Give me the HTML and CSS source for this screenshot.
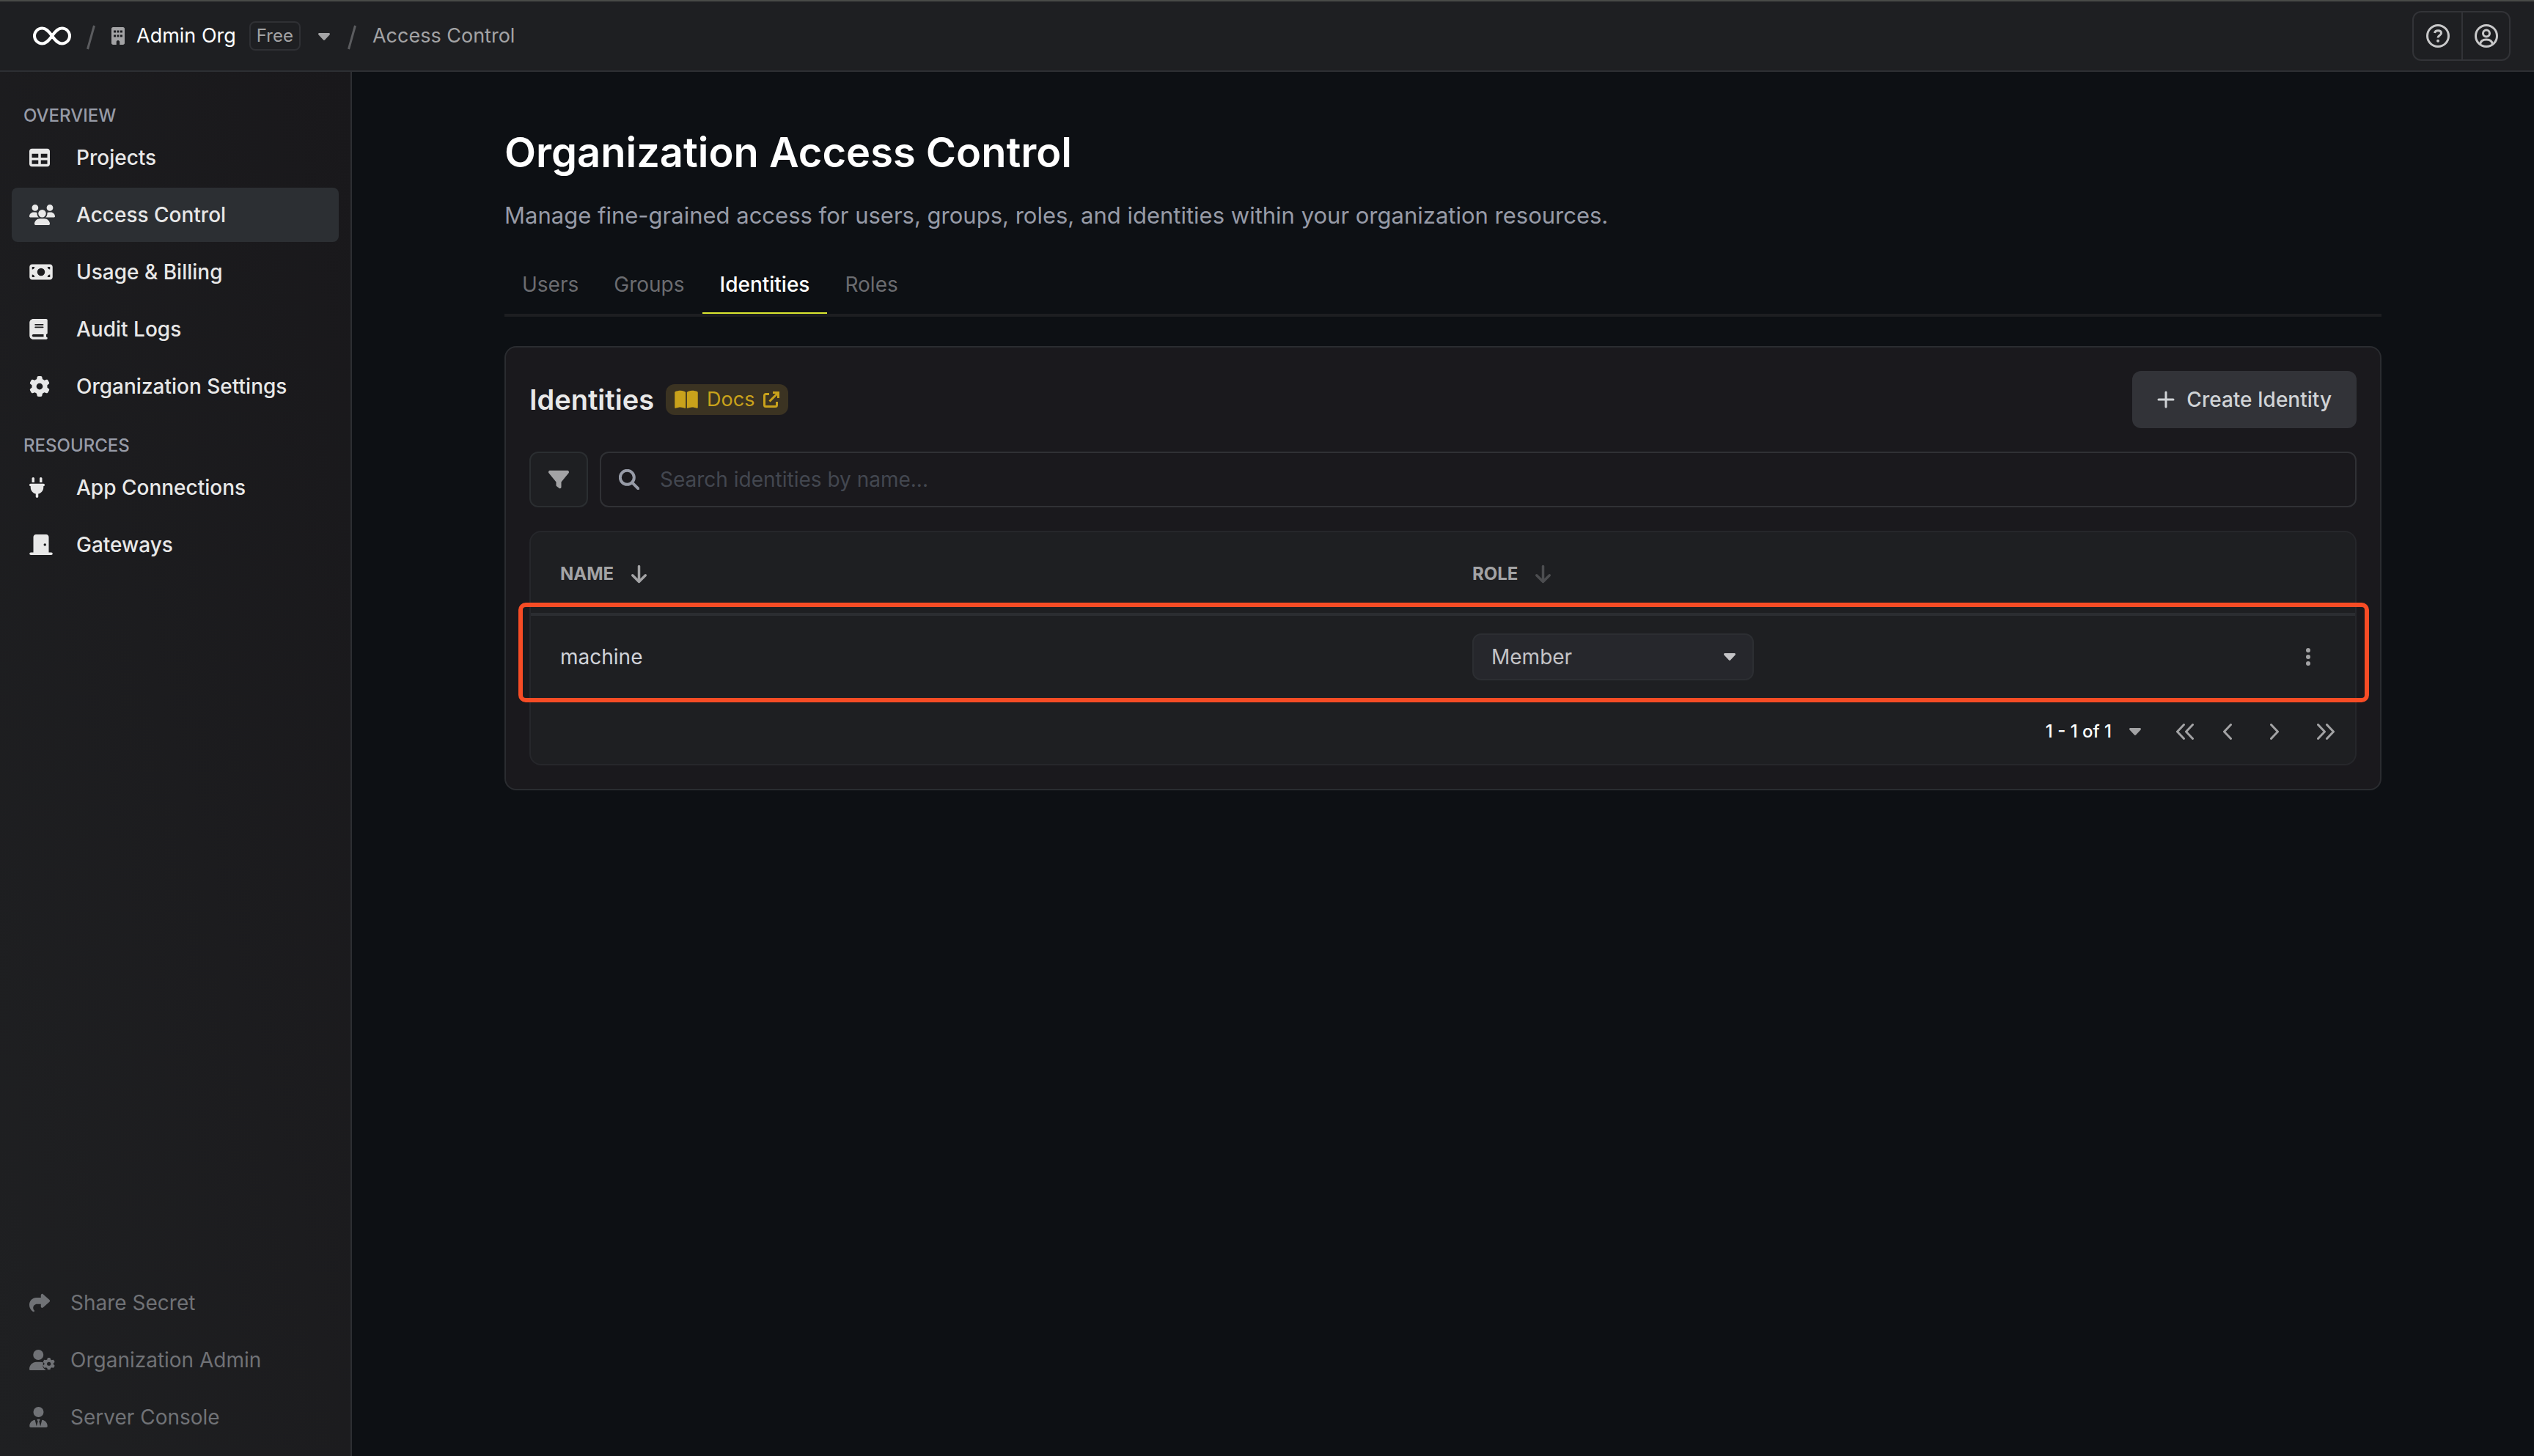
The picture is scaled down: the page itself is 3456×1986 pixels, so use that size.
FILE: index.html
```html
<!DOCTYPE html>
<html lang="en">
<head>
<meta charset="utf-8">
<meta name="viewport" content="width=device-width, initial-scale=1">
<title>Organization Access Control</title>
<link rel="stylesheet" href="styles.css">
</head>
<body>
<svg class="sprite" aria-hidden="true">
  <symbol id="caret" viewBox="0 0 16 10"><path d="M1.500 0h13c1.300 0 1.900 1.500 1 2.400L9.200 9.300a1.700 1.700 0 0 1-2.400 0L.5 2.400C-.4 1.500.2 0 1.500 0z"/></symbol>
  <symbol id="arrow-down" viewBox="0 0 384 512"><path d="M169.400 470.600c12.500 12.500 32.800 12.500 45.300 0l160-160c12.500-12.500 12.500-32.800 0-45.300s-32.800-12.500-45.300 0L224 370.800V64c0-17.700-14.300-32-32-32s-32 14.300-32 32V370.800L54.600 265.400c-12.500-12.500-32.800-12.500-45.300 0s-12.500 32.800 0 45.300l160 160z"/></symbol>
  <symbol id="gear" viewBox="0 0 512 512"><path d="M495.900 166.600c3.200 8.700 .5 18.400-6.400 24.600l-43.300 39.400c1.100 8.300 1.700 16.800 1.700 25.400s-.6 17.100-1.700 25.400l43.300 39.400c6.900 6.200 9.600 15.900 6.400 24.600c-4.400 11.900-9.700 23.300-15.800 34.300l-4.700 8.100c-6.600 11-14 21.400-22.100 31.200c-5.900 7.200-15.700 9.600-24.500 6.800l-55.700-17.700c-13.400 10.300-28.200 18.900-44 25.400l-12.500 57.100c-2 9.100-9 16.300-18.200 17.800c-13.800 2.300-28 3.500-42.500 3.500s-28.700-1.200-42.500-3.500c-9.200-1.500-16.200-8.700-18.200-17.800l-12.500-57.100c-15.800-6.500-30.600-15.100-44-25.400L83.100 425.900c-8.800 2.800-18.600 .3-24.500-6.800c-8.100-9.800-15.500-20.200-22.100-31.200l-4.700-8.100c-6.100-11-11.400-22.400-15.800-34.300c-3.200-8.700-.5-18.400 6.400-24.600l43.300-39.400C64.600 273.100 64 264.600 64 256s.6-17.100 1.700-25.400L22.400 191.200c-6.900-6.200-9.600-15.900-6.400-24.600c4.400-11.900 9.700-23.300 15.800-34.300l4.700-8.100c6.600-11 14-21.400 22.100-31.200c5.900-7.200 15.700-9.600 24.500-6.800l55.700 17.700c13.400-10.300 28.200-18.900 44-25.400l12.500-57.100c2-9.100 9-16.300 18.200-17.800C227.300 1.200 241.500 0 256 0s28.700 1.200 42.500 3.500c9.200 1.500 16.200 8.700 18.200 17.800l12.500 57.100c15.800 6.500 30.600 15.100 44 25.400l55.700-17.700c8.800-2.800 18.600-.3 24.500 6.800c8.100 9.800 15.500 20.200 22.100 31.200l4.700 8.100c6.100 11 11.400 22.400 15.800 34.300zM256 336a80 80 0 1 0 0-160 80 80 0 1 0 0 160z"/></symbol>
</svg>

<header class="topbar">
  <nav class="crumbs" aria-label="Breadcrumb">
    <a class="logo" href="#" aria-label="Home"><svg width="54" height="26" viewBox="0 0 54 26"><path d="M27 13C22 6 18.500 2.500 13.500 2.500a10.500 10.500 0 0 0 0 21C18.500 23.500 22 20 27 13S35.500 2.500 40.500 2.500a10.500 10.500 0 0 1 0 21C35.500 23.500 32 20 27 13z" fill="none" stroke="#fff" stroke-width="4"/></svg></a>
    <svg class="slash" width="12" height="34" viewBox="0 0 12 34"><path d="M10.500 1 1.500 33"/></svg>
    <a class="org" href="#">
      <svg class="fill" width="18" height="24" viewBox="0 0 384 512"><path fill-rule="evenodd" d="M48 0C21.500 0 0 21.500 0 48V464c0 26.500 21.500 48 48 48h96V432c0-26.500 21.500-48 48-48s48 21.500 48 48v80h96c26.500 0 48-21.500 48-48V48c0-26.500-21.500-48-48-48H48zM64 96h64v64H64zM160 96h64v64h-64zM256 96h64v64h-64zM64 224h64v64H64zM160 224h64v64h-64zM256 224h64v64h-64z"/></svg>
      <span>Admin Org</span>
    </a>
    <span class="plan">Free</span>
    <button class="plain org-menu" type="button" aria-label="Switch organization"><svg class="fill" width="16" height="10"><use href="#caret"/></svg></button>
    <svg class="slash" width="12" height="34" viewBox="0 0 12 34"><path d="M10.500 1 1.500 33"/></svg>
    <span class="crumb">Access Control</span>
  </nav>
  <div class="top-actions">
    <button type="button" aria-label="Help"><svg class="line" width="32" height="32" viewBox="0 0 32 32"><circle cx="16" cy="16" r="14.500"/><path d="M11.500 12c.5-2.200 2.200-3.200 4.500-3.200 2.600 0 4.500 1.300 4.500 3.500 0 3-4.500 3-4.500 6.200"/><circle class="dot" cx="16" cy="22.800" r="2"/></svg></button>
    <button type="button" aria-label="Account"><svg class="line" width="32" height="32" viewBox="0 0 32 32"><circle cx="16" cy="16" r="14.500"/><circle cx="16" cy="12.500" r="4.500"/><path d="M7.500 27.500c.5-4 3-6.500 8.500-6.500s8 2.500 8.500 6.500"/></svg></button>
  </div>
</header>

<div class="shell">
  <aside class="sidebar">
    <nav aria-label="Main">
      <h2>OVERVIEW</h2>
      <ul>
        <li><a href="#"><svg width="28" height="28" viewBox="0 0 512 512"><path d="M64 256V160H224v96H64zm0 64H224v96H64V320zm224 96V320H448v96H288zM448 256H288V160H448v96zM64 32C28.700 32 0 60.700 0 96V416c0 35.300 28.700 64 64 64H448c35.300 0 64-28.700 64-64V96c0-35.300-28.700-64-64-64H64z"/></svg>Projects</a></li>
        <li><a class="active" href="#" aria-current="page"><svg width="35" height="28" viewBox="0 0 640 512"><path d="M144 0a80 80 0 1 1 0 160A80 80 0 1 1 144 0zM512 0a80 80 0 1 1 0 160A80 80 0 1 1 512 0zM0 298.700C0 239.800 47.800 192 106.700 192h42.700c15.900 0 31 3.500 44.600 9.700c-1.300 7.200-1.900 14.700-1.900 22.300c0 38.200 16.800 72.500 43.300 96c-.2 0-.4 0-.7 0H21.300C9.600 320 0 310.400 0 298.700zM405.300 320c-.2 0-.4 0-.7 0c26.600-23.500 43.300-57.800 43.300-96c0-7.600-.7-15-1.900-22.300c13.600-6.300 28.700-9.700 44.600-9.700h42.700C592.200 192 640 239.800 640 298.700c0 11.800-9.600 21.300-21.300 21.300H405.300zM224 224a96 96 0 1 1 192 0 96 96 0 1 1 -192 0zM128 485.300C128 411.700 187.700 352 261.300 352H378.700C452.300 352 512 411.700 512 485.300c0 14.700-11.900 26.700-26.700 26.700H154.700c-14.700 0-26.700-11.900-26.700-26.700z"/></svg>Access Control</a></li>
        <li><a href="#"><svg width="32" height="28" viewBox="0 0 576 512"><path d="M64 64C28.700 64 0 92.700 0 128V384c0 35.300 28.700 64 64 64H512c35.300 0 64-28.700 64-64V128c0-35.300-28.700-64-64-64H64zm64 320H64V320c35.300 0 64 28.700 64 64zM64 192V128h64c0 35.300-28.700 64-64 64zM448 384c0-35.300 28.700-64 64-64v64H448zm64-192c-35.300 0-64-28.700-64-64h64v64zM288 160a96 96 0 1 1 0 192 96 96 0 1 1 0-192z"/></svg>Usage &amp; Billing</a></li>
        <li><a href="#"><svg width="25" height="28" viewBox="0 0 448 512"><path d="M96 0C43 0 0 43 0 96V416c0 53 43 96 96 96H384h32c17.700 0 32-14.300 32-32s-14.300-32-32-32V384c17.700 0 32-14.300 32-32V32c0-17.700-14.300-32-32-32H384 96zm0 384H352v64H96c-17.700 0-32-14.300-32-32s14.300-32 32-32zm32-240c0-8.800 7.200-16 16-16H336c8.800 0 16 7.200 16 16s-7.200 16-16 16H144c-8.800 0-16-7.200-16-16zm16 48H336c8.800 0 16 7.200 16 16s-7.200 16-16 16H144c-8.800 0-16-7.200-16-16s7.200-16 16-16z"/></svg>Audit Logs</a></li>
        <li><a href="#"><svg width="28" height="28"><use href="#gear"/></svg>Organization Settings</a></li>
      </ul>
      <h2>RESOURCES</h2>
      <ul>
        <li><a href="#"><svg width="21" height="28" viewBox="0 0 384 512"><path d="M96 0C78.300 0 64 14.300 64 32v96h64V32c0-17.700-14.300-32-32-32zM288 0c-17.700 0-32 14.300-32 32v96h64V32c0-17.700-14.300-32-32-32zM32 160c-17.700 0-32 14.300-32 32s14.300 32 32 32v32c0 77.400 55 142 128 156.800V480c0 17.700 14.300 32 32 32s32-14.300 32-32V412.800C297 398 352 333.400 352 256V224c17.700 0 32-14.300 32-32s-14.300-32-32-32H32z"/></svg>App Connections</a></li>
        <li><a href="#"><svg width="32" height="28" viewBox="0 0 576 512"><path d="M96 64c0-35.300 28.700-64 64-64H416c35.300 0 64 28.700 64 64V448h64c17.700 0 32 14.300 32 32s-14.300 32-32 32H432 144 32c-17.700 0-32-14.300-32-32s14.300-32 32-32H96V64zM384 288a32 32 0 1 0 0-64 32 32 0 1 0 0 64z"/></svg>Gateways</a></li>
      </ul>
    </nav>
    <nav class="secondary" aria-label="Secondary">
      <ul>
        <li><a href="#"><svg width="28" height="28" viewBox="0 0 512 512"><path d="M307 34.800c-11.500 5.100-19 16.600-19 29.200v64H176C78.800 128 0 206.800 0 304C0 417.300 81.500 467.900 100.200 478.100c2.500 1.400 5.300 1.900 8.100 1.900c10.900 0 19.700-8.900 19.700-19.700c0-7.500-4.300-14.400-9.800-19.500C108.800 431.900 96 414.400 96 384c0-53 43-96 96-96h96v64c0 12.600 7.400 24.100 19 29.200s25 3 34.400-5.400l160-144c6.700-6.100 10.600-14.700 10.600-23.800s-3.800-17.700-10.600-23.800l-160-144c-9.400-8.500-22.900-10.600-34.400-5.400z"/></svg>Share Secret</a></li>
        <li><a href="#"><svg width="35" height="28" viewBox="0 0 640 512"><path d="M224 256A128 128 0 1 0 224 0a128 128 0 1 0 0 256zM178.300 304C79.800 304 0 383.800 0 482.300 0 498.700 13.300 512 29.700 512H408c6-10-2-17-14-20-20-10-42-35-54-62-8-18-2-34 12-44-14-14-16-32-8-50l8-16c-25-10-50-16-82-16z"/><use href="#gear" x="336" y="200" width="304" height="304"/></svg>Organization Admin</a></li>
        <li><a href="#"><svg width="25" height="28" viewBox="0 0 448 512"><path d="M96 128a128 128 0 1 0 256 0A128 128 0 1 0 96 128zm94.500 200.200l18.600 31L175.800 483.100l-36-146.900c-2-8.100-9.800-13.400-17.900-11.300C51.900 342.400 0 405.800 0 481.300c0 17 13.800 30.700 30.700 30.700H162.500c0 0 0 0 .1 0H168 280h5.500c0 0 0 0 .1 0H417.300c17 0 30.700-13.800 30.700-30.700c0-75.500-51.900-138.900-121.900-156.400c-8.100-2-15.900 3.300-17.900 11.300l-36 146.900L238.900 359.200l18.600-31c6.400-10.700-1.300-24.200-13.700-24.200H224 204.300c-12.400 0-20.100 13.600-13.700 24.200z"/></svg>Server Console</a></li>
      </ul>
    </nav>
  </aside>

  <main class="page">
    <div class="content">
      <h1>Organization Access Control</h1>
      <p class="lead">Manage fine-grained access for users, groups, roles, and identities within your organization resources.</p>
      <div class="tabs" role="tablist">
        <button type="button" role="tab" aria-selected="false">Users</button>
        <button type="button" role="tab" aria-selected="false">Groups</button>
        <button type="button" role="tab" aria-selected="true">Identities</button>
        <button type="button" role="tab" aria-selected="false">Roles</button>
      </div>

      <section class="card">
        <div class="card-head">
          <h2>Identities</h2>
          <a class="docs" href="#">
            <svg width="32" height="28" viewBox="0 0 576 512"><path d="M249.600 471.500c10.800 3.800 22.400-4.100 22.400-15.500V78.600c0-4.200-1.600-8.400-5-11C247.400 52 202.400 32 144 32C93.500 32 46.300 45.300 18.100 56.100C6.800 60.500 0 71.700 0 83.800V454.100c0 11.900 12.800 20.200 24.100 16.500C55.600 460.100 105.500 448 144 448c33.900 0 79 14 105.600 23.500zm76.800 0C353 462 398.100 448 432 448c38.500 0 88.400 12.100 119.900 22.600c11.300 3.800 24.100-4.600 24.100-16.500V83.800c0-12.100-6.800-23.300-18.100-27.600C529.700 45.300 482.500 32 432 32c-58.400 0-103.400 20-123 35.600c-3.300 2.600-5 6.800-5 11V456c0 11.400 11.700 19.300 22.400 15.500z"/></svg>
            <span>Docs</span>
            <svg class="ext" width="22" height="22" viewBox="0 0 22 22"><path d="M8 3.500H3.500a2 2 0 0 0-2 2v13a2 2 0 0 0 2 2h13a2 2 0 0 0 2-2V14M13 1.500h7.500V9M20 2 8.500 13.500"/></svg>
          </a>
          <button class="create" type="button">
            <svg width="24" height="24" viewBox="0 0 24 24"><path d="M12 2v20M2 12h20"/></svg>
            Create Identity
          </button>
        </div>

        <div class="filters">
          <button class="filter" type="button" aria-label="Filter"><svg class="fill" width="28" height="28" viewBox="0 0 512 512"><path d="M3.900 54.900C10.500 40.900 24.500 32 40 32H472c15.500 0 29.500 8.900 36.100 22.900s4.600 30.500-5.200 42.500L320 320.900V448c0 12.100-6.800 23.200-17.700 28.600s-23.800 4.300-33.500-3l-64-48c-8.100-6-12.800-15.500-12.800-25.600V320.900L9 97.300C-.7 85.400-2.800 68.800 3.900 54.900z"/></svg></button>
          <label class="search">
            <svg width="28" height="28" viewBox="0 0 28 28"><circle cx="11.300" cy="11.300" r="9.500"/><path d="m18.300 18.300 8 8"/></svg>
            <input type="text" placeholder="Search identities by name..." aria-label="Search identities by name">
          </label>
        </div>

        <div class="panel">
          <table>
            <thead>
              <tr>
                <th scope="col"><span class="sort">NAME <button class="plain" type="button" aria-label="Sort by name"><svg class="fill" width="21" height="28"><use href="#arrow-down"/></svg></button></span></th>
                <th scope="col"><span class="sort">ROLE <button class="plain faded" type="button" aria-label="Sort by role"><svg class="fill" width="21" height="28"><use href="#arrow-down"/></svg></button></span></th>
                <th scope="col" class="actions"></th>
              </tr>
            </thead>
            <tbody>
              <tr class="marked">
                <td>machine</td>
                <td>
                  <div class="role">
                    <select aria-label="Role of machine"><option>Member</option></select>
                    <svg width="16" height="10"><use href="#caret"/></svg>
                  </div>
                </td>
                <td class="actions"><button class="plain" type="button" aria-label="More actions"><svg class="fill" width="8" height="28" viewBox="0 0 8 28"><circle cx="4" cy="5" r="3"/><circle cx="4" cy="14" r="3"/><circle cx="4" cy="23" r="3"/></svg></button></td>
              </tr>
            </tbody>
          </table>
          <div class="pager">
            <button class="plain range" type="button">1 - 1 of 1 <svg class="fill" width="16" height="10"><use href="#caret"/></svg></button>
            <button class="plain" type="button" aria-label="First page"><svg class="chev" width="24" height="22" viewBox="0 0 24 22"><path d="M10.500 1.500 1.500 11l9 9.500M22.500 1.500 13.500 11l9 9.500"/></svg></button>
            <button class="plain" type="button" aria-label="Previous page"><svg class="chev" width="12" height="22" viewBox="0 0 12 22"><path d="M10.500 1.500 1.500 11l9 9.500"/></svg></button>
            <button class="plain next" type="button" aria-label="Next page"><svg class="chev" width="12" height="22" viewBox="0 0 12 22"><path d="m1.500 1.500 9 9.500-9 9.500"/></svg></button>
            <button class="plain next" type="button" aria-label="Last page"><svg class="chev" width="24" height="22" viewBox="0 0 24 22"><path d="m1.500 1.500 9 9.500-9 9.500M13.500 1.500l9 9.500-9 9.500"/></svg></button>
          </div>
        </div>
      </section>
    </div>
  </main>
</div>
</body>
</html>
```

FILE: styles.css
```css
* { box-sizing: border-box; }

body {
  margin: 0;
  min-height: 100vh;
  display: flex;
  flex-direction: column;
  background: #0d1014;
  color: #e8e8e8;
  font: 400 28px/40px Inter, "Liberation Sans", sans-serif;
}

h1, h2, p, ul { margin: 0; padding: 0; }
ul { list-style: none; }
a { color: inherit; text-decoration: none; }
button, input, select { font: inherit; color: inherit; margin: 0; }
svg { display: block; flex: none; }

.sprite { position: absolute; width: 0; height: 0; }
.fill { fill: #a3a3a5; }
.plain { display: flex; align-items: center; padding: 0; border: 0; background: none; }

/* Top bar */
.topbar {
  display: flex;
  align-items: center;
  justify-content: space-between;
  height: 98px;
  padding: 0 32px 0 44px;
  background: #1e1f22;
  border-top: 2px solid #484a48;
  border-bottom: 2px solid #2d2f33;
  font-size: 27px;
}
.crumbs { display: flex; align-items: center; }
.slash { margin: 4px 22px 0 20px; fill: none; stroke: #5b5c5f; stroke-width: 3; }
.org { display: flex; align-items: center; gap: 16px; color: #fff; }
.plan {
  margin-left: 18px;
  padding: 0 8px;
  border: 2px solid #2f3034;
  border-radius: 8px;
  color: #a3a3a5;
  font-size: 24px;
  line-height: 36px;
}
.org-menu { margin: 2px 4px 0 24px; }
.crumb { color: #a3a3a5; }

.top-actions {
  display: flex;
  border: 2px solid #323337;
  border-radius: 12px;
}
.top-actions button {
  width: 65px;
  height: 64px;
  display: grid;
  place-items: center;
  padding: 0;
  border: 0;
  background: none;
}
.top-actions button + button { border-left: 2px solid #323337; }
.line { fill: none; stroke: #c8c8c9; stroke-width: 3; }
.line .dot { fill: #c8c8c9; stroke: none; }

/* Sidebar */
.shell { flex: 1; display: flex; }
.sidebar {
  flex: none;
  width: 480px;
  display: flex;
  flex-direction: column;
  justify-content: space-between;
  padding: 40px 16px 16px;
  border-right: 2px solid #2d2f33;
  background: linear-gradient(to top right, #1f2022, #19181b);
}
.sidebar h2 {
  padding: 0 16px;
  color: #979ba7;
  font-size: 24px;
  font-weight: 500;
  line-height: 40px;
}
.sidebar ul + h2 { margin-top: 24px; }
.sidebar li + li { margin-top: 4px; }
.sidebar li a {
  display: grid;
  grid-template-columns: 64px 1fr;
  align-items: center;
  height: 74px;
  padding: 0 24px;
  border-radius: 8px;
  font-weight: 500;
}
.sidebar li a.active { background: #2c2f33; }
.sidebar svg { fill: currentColor; }
.sidebar .secondary li a {
  grid-template-columns: 56px 1fr;
  color: #707276;
  font-weight: 400;
}

/* Page */
.page { flex: 1; min-width: 0; padding: 70px 64px; }
.content { max-width: 2560px; margin: 0 auto; }
h1 { color: #fff; font-size: 56px; font-weight: 600; line-height: 80px; }
.lead { margin-top: 26px; color: #979ba7; font-size: 31px; line-height: 40px; }

.tabs { display: flex; margin-top: 44px; border-bottom: 4px solid #1d1e21; }
.tabs button {
  height: 70px;
  padding: 0 24px 8px;
  border: 0;
  border-bottom: 2px solid transparent;
  background: none;
  color: #6b6c70;
}
.tabs button[aria-selected="true"] { color: #fff; border-color: #dbe82f; font-weight: 500; }

.card {
  margin-top: 40px;
  padding: 32px;
  border: 2px solid #2a2c30;
  border-radius: 16px;
  background: #1a191d;
}
.card-head { display: flex; align-items: center; min-height: 78px; }
.card-head h2 { font-size: 38px; font-weight: 600; line-height: 56px; }
.docs {
  display: flex;
  align-items: center;
  gap: 12px;
  height: 42px;
  margin-left: 16px;
  padding: 0 12px;
  border-radius: 12px;
  background: #3b3322;
  color: #c9a21b;
  fill: #c9a21b;
  font-size: 27px;
}
.docs .ext { fill: none; stroke: #c9a21b; stroke-width: 3; }
.create {
  display: flex;
  align-items: center;
  gap: 16px;
  height: 78px;
  margin-left: auto;
  padding: 0 34px;
  border: 0;
  border-radius: 12px;
  background: #323338;
  color: #d0d3d6;
  font-weight: 500;
}
.create svg { stroke: #d0d3d6; stroke-width: 3; stroke-linecap: round; }

.filters { display: flex; gap: 16px; margin-top: 32px; }
.filter {
  width: 80px;
  height: 76px;
  display: grid;
  place-items: center;
  padding: 0;
  border: 2px solid #2b2e31;
  border-radius: 12px;
  background: #1e1f22;
}
.search {
  flex: 1;
  display: flex;
  align-items: center;
  gap: 28px;
  padding: 0 24px;
  border: 2px solid #303135;
  border-radius: 12px;
}
.search svg { fill: none; stroke: #979ba7; stroke-width: 4; stroke-linecap: round; }
.search input {
  flex: 1;
  min-width: 0;
  padding: 0;
  border: 0;
  outline: 0;
  background: none;
}
.search input::placeholder { color: #434750; opacity: 1; }

/* Table */
.panel {
  margin-top: 32px;
  border: 2px solid #26272b;
  border-radius: 16px;
  background: #1e1f22;
}
table { width: 100%; border-collapse: separate; border-spacing: 0; table-layout: fixed; }
th, td { padding: 0 40px; text-align: left; }
th {
  height: 114px;
  padding-top: 4px;
  border-bottom: 4px solid #2b2d31;
  color: #a3a3a5;
  font-size: 24px;
  font-weight: 700;
}
th:first-child { width: 50%; }
td { height: 112px; color: #d0d3da; }
.actions { width: 128px; padding: 0 60px 0 0; }
.actions .plain { margin-left: auto; }
.sort { display: flex; align-items: center; gap: 24px; }
.faded { opacity: .35; }

/* The outline spans the whole row and hangs over the panel's edges */
.marked { position: relative; }
.marked td:first-child::after {
  content: "";
  position: absolute;
  inset: -18px -19px -6px -17px;
  border: 6px solid #f74c25;
  border-radius: 10px;
  pointer-events: none;
}

.role { display: grid; align-items: center; width: 384px; }
.role > * { grid-area: 1 / 1; }
.role select {
  appearance: none;
  width: 100%;
  height: 64px;
  padding: 0 24px;
  border: 2px solid #2c2e32;
  border-radius: 12px;
  background: #26272c;
  color: #c4c4c7;
}
.role svg { justify-self: end; margin-right: 25px; fill: #c4c4c7; pointer-events: none; }

.pager {
  display: flex;
  align-items: center;
  justify-content: flex-end;
  gap: 40px;
  height: 90px;
  padding: 2px 28px 0;
}
.range { gap: 24px; margin-right: 8px; color: #fff; font-size: 24px; font-weight: 500; }
.next { margin-left: 12px; }
.chev { fill: none; stroke: #a3a3a5; stroke-width: 3; stroke-linecap: round; stroke-linejoin: round; }
```
